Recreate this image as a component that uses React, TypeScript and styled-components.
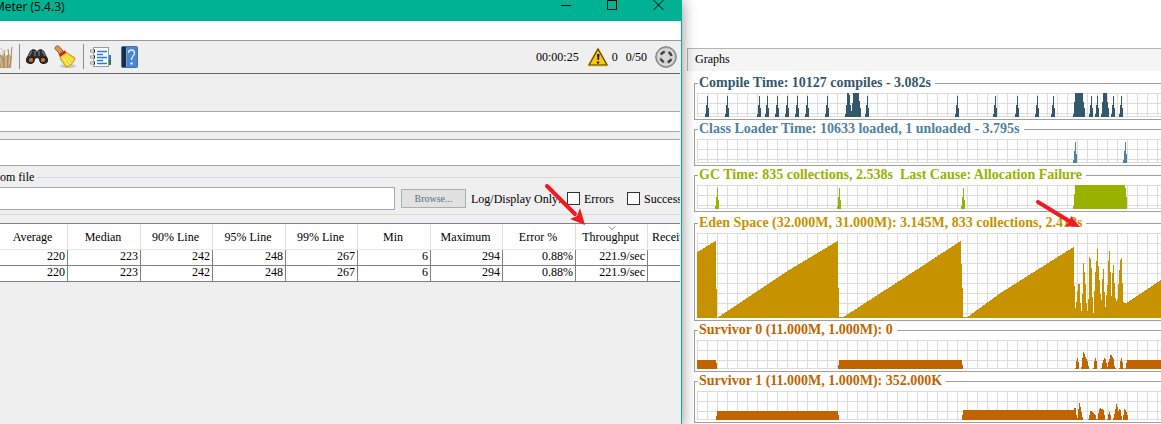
import React from 'react';
import styled, { createGlobalStyle } from 'styled-components';

const Global = createGlobalStyle`
  * { box-sizing: border-box; }
  body {
    margin: 0;
    background: #fff;
    color: #000;
    font: 12px/14px "Liberation Serif", serif;
    overflow: hidden;
  }
  button, input { font: inherit; color: inherit; }
`;

const Desktop = styled.main`
  display: grid;
  grid-template-columns: 682fr 479fr;
  min-height: 100vh;
`;

const AppWindow = styled.section`
  position: relative;
  z-index: 1;
  min-width: 0;
  background: #efefef;
  border-right: 1px solid #00b294;
  box-shadow: 0 0 14px rgba(0, 0, 0, 0.45);
`;

const TitleBar = styled.header`
  display: flex;
  justify-content: space-between;
  align-items: flex-start;
  height: 21px;
  background: #00b294;
`;

const WindowTitle = styled.h1`
  margin: 0 0 0 -6px;
  font: 12px/13px "Open Sans", sans-serif;
`;

const WindowButtons = styled.div`
  display: flex;
`;

const WindowButton = styled.button`
  display: flex;
  justify-content: center;
  width: 46px;
  height: 11px;
  padding: 0;
  border: 0;
  background: none;
`;

const MenuBar = styled.nav`
  height: 20px;
  background: #fff;
  border-bottom: 1px solid #999;
`;

const Content = styled.div`
  margin-right: 1px;
  overflow: hidden;
`;

const Toolbar = styled.div`
  display: flex;
  justify-content: space-between;
  height: 33px;
  padding-bottom: 1px;
  border-bottom: 1px solid #686868;
`;

const ToolGroup = styled.div<{ $gap?: number }>`
  display: flex;
  align-items: center;
  gap: ${(p) => p.$gap ?? 6}px;
`;

const ToolButton = styled.button`
  display: flex;
  padding: 0;
  border: 0;
  background: none;
`;

const Separator = styled.span`
  width: 1px;
  height: 25px;
  background: #8c8c8c;
`;

const Status = styled(ToolGroup)`
  padding-right: 3px;
`;

const Form = styled.form`
  display: flex;
  flex-direction: column;
  padding-top: 37px;
`;

const WideField = styled.input<{ $height: number }>`
  width: 100%;
  height: ${(p) => p.$height}px;
  margin-bottom: ${(p) => (p.$height > 21 ? 5 : 7)}px;
  border: solid #a6a6a8;
  border-width: 1px 0;
  background: #fff;
`;

const FileGroup = styled.fieldset`
  min-width: 0;
  margin: 0 0 8px;
  padding: 3px 0 4px;
  border: solid #dadada;
  border-width: 1px 0;
`;

const FileLegend = styled.legend`
  height: 13px;
  padding: 0 3px 0 0;
  line-height: 13px;
`;

const FileRow = styled.div`
  display: flex;
  align-items: center;
  white-space: nowrap;
`;

const FileInput = styled.input`
  flex: 0 0 395px;
  height: 23px;
  margin-right: 6px;
  border: 1px solid #a6a6b0;
  border-left: 0;
  background: #fff;
`;

const Browse = styled.button`
  flex: 0 0 65px;
  height: 19px;
  margin-right: 5px;
  padding: 0;
  border: 1px solid #adadad;
  background: #e1e1e1;
  color: #5a7484;
  font-size: 10px;
`;

const OnlyLabel = styled.span`
  flex: 0 0 96px;
`;

const CheckLabel = styled.label`
  display: flex;
  align-items: center;
  flex: 0 0 60px;
  gap: 4px;
`;

const CheckBox = styled.input`
  appearance: none;
  flex: none;
  width: 13px;
  height: 13px;
  margin: 0;
  border: 1px solid #333;
  background: #fff;
`;

const Results = styled.table`
  width: 100%;
  table-layout: fixed;
  border-collapse: separate;
  border-spacing: 0;
  border-top: 1px solid #82828c;
  background: #fff;
`;

const HeadCell = styled.th`
  position: relative;
  height: 26px;
  padding: 1px 5px 0 3px;
  border-right: 1px solid #e0e0e0;
  border-bottom: 1px solid #e8e8e8;
  font-weight: 400;
  white-space: nowrap;
  overflow: hidden;
  &:last-child { border-right: 0; padding-left: 4px; text-align: left; }
`;

const SortMark = styled.svg`
  position: absolute;
  top: 2px;
  left: 32px;
`;

const Cell = styled.td`
  height: 16px;
  padding: 0 2px 2px 0;
  border-right: 1px solid #808080;
  border-bottom: 1px solid #808080;
  line-height: 13px;
  text-align: right;
  &:last-child { border-right: 0; }
`;

const Monitor = styled.section`
  position: relative;
  min-width: 0;
  padding: 48px 0 0 5px;
  overflow: hidden;
`;

const TabTitle = styled.h2`
  height: 23px;
  margin: 0 0 6px;
  padding-left: 7px;
  border: solid #b4b4b4;
  border-width: 1px 0 0 1px;
  background: #f5f5f5;
  font-size: 12px;
  font-weight: 400;
  line-height: 21px;
`;

const Panels = styled.div`
  display: flex;
  flex-direction: column;
  gap: 3px;
  margin: 0 0 5px 7px;
`;

const Panel = styled.fieldset<{ $color: string }>`
  min-width: 0;
  margin: 0;
  padding: 3px 0 2px 2px;
  border: solid #a0a0a0;
  border-width: 1px 0 1px 1px;
  color: ${(p) => p.$color};
`;

const PanelTitle = styled.legend`
  height: 13px;
  margin-left: 1px;
  padding: 0 4px 0 1px;
  font-size: 14px;
  font-weight: 700;
  line-height: 12px;
  white-space: pre;
`;

const Plot = styled.svg`
  display: block;
  width: 100%;
`;

const Arrow = styled.svg<{ $x: number; $y: number }>`
  position: absolute;
  left: ${(p) => p.$x}px;
  top: ${(p) => p.$y}px;
  pointer-events: none;
`;

type Point = [number, number];

/* One-pixel columns through the given (x, height) points. */
function columns(points: Point[], base: number) {
  let d = `M${points[0][0]} ${base}`;
  for (let i = 0; i < points.length - 1; i++) {
    const [x0, h0] = points[i];
    const [x1, h1] = points[i + 1];
    for (let x = x0; x < x1; x++) {
      const h = Math.round(h0 + ((h1 - h0) * (x - x0)) / (x1 - x0));
      d += `V${base - h}h1`;
    }
  }
  return `${d}V${base}z`;
}

const noise = (start: number, heights: number[]): Point[] =>
  heights.map((h, i) => [start + i, h]);

const spikes = (tips: number[], base: number) =>
  tips.map((t) => `M${t - 2} ${base}v-3h1v-9h1v-9h1v12h1v9z`).join('');

const compile =
  spikes([10, 30, 62, 70, 80, 90, 100, 110, 130, 170, 260, 298, 320, 340, 356, 394, 400, 416, 424], 24) +
  'M148 24v-3h1v-9h1v-12h2v2h1v10h1v6h1v-8h1v-10h6v8h1v7h1v9z' +
  'M376 24v-3h1v-12h1v-9h8v9h1v6h1v9z' +
  'M404 24v-3h1v-12h1v-9h4v9h1v6h1v9z';
const loader = spikes([378, 428], 24);
const gc = spikes([20, 142, 266], 24) + 'M376 24v-3h1v-12h1v-9h50v3h1v9h1v12z';

const eden = columns(
  [
    [0, 66], [18, 77], [19, 29], [20, 0], [21, 1], [90, 47], [140, 77], [141, 30], [142, 1], [146, 1],
    [228, 54], [263, 77], [265, 30], [266, 1], [270, 1], [303, 25], [376, 71],
    ...noise(377, [
      32, 10, 16, 27, 34, 34, 15, 7, 24, 55, 46, 34, 15, 7, 19, 61, 59, 50, 21, 5, 27, 46, 57, 69, 52, 38, 24, 18,
      39, 49, 26, 11, 23, 33, 57, 67, 46, 22, 45, 53, 35, 20, 17, 19, 34, 48, 58, 60, 35, 16, 15, 15, 15,
    ]),
    [465, 39], [600, 77],
  ],
  85,
);

const survivor0 = columns(
  [
    [0, 9], [18, 9], [19, 6], [20, 0], [140, 0], [141, 4], [142, 9], [264, 9], [265, 4], [266, 0], [377, 0],
    ...noise(378, [
      1, 8, 11, 7, 0, 0, 2, 11, 17, 15, 12, 10, 8, 3, 0, 0, 0, 0, 1, 8, 11, 8, 0, 0, 0, 0, 1, 6, 9, 11, 10, 6, 2,
      7, 10, 14, 14, 12, 10, 3, 1, 0, 0, 0, 1, 8, 11, 7, 1, 0, 1, 6, 9,
    ]),
    [600, 9],
  ],
  29,
);

const survivor1 = columns(
  [
    [18, 0], [19, 4], [20, 9], [140, 9], [141, 5], [142, 0], [264, 0], [265, 5], [266, 10], [376, 10],
    ...noise(377, [
      12, 12, 5, 2, 11, 17, 13, 8, 3, 0, 0, 0, 0, 0, 1, 5, 9, 9, 8, 7, 6, 5, 1, 1, 7, 11, 12, 11, 11, 10, 5, 0, 0,
      1, 6, 8, 5, 0, 0, 2, 6, 11, 16, 13, 9, 11, 10, 4, 0, 5, 11, 10, 8, 5, 0,
    ]),
  ],
  29,
);

const timePanels = [
  { title: 'Compile Time: 10127 compiles - 3.082s', color: '#34586b', height: 24, d: compile },
  { title: 'Class Loader Time: 10633 loaded, 1 unloaded - 3.795s', color: '#4f819f', height: 24, d: loader },
  { title: 'GC Time: 835 collections, 2.538s  Last Cause: Allocation Failure', color: '#98b200', height: 24, d: gc },
];

const memoryPanels = [
  { title: 'Eden Space (32.000M, 31.000M): 3.145M, 833 collections, 2.418s', color: '#c79200', height: 85, d: eden },
  { title: 'Survivor 0 (11.000M, 1.000M): 0', color: '#c16400', height: 29, d: survivor0 },
  { title: 'Survivor 1 (11.000M, 1.000M): 352.000K', color: '#c16400', height: 29, d: survivor1 },
];

type GraphProps = { title: string; color: string; height: number; d: string };

function Graph({ title, color, height, d }: GraphProps) {
  const id = `grid-${title.replace(/\W/g, '').slice(0, 9)}`;
  return (
    <Panel $color={color}>
      <PanelTitle>{title}</PanelTitle>
      <Plot height={height} shapeRendering="crispEdges" aria-hidden="true">
        <defs>
          <pattern id={id} width="10" height="10" patternUnits="userSpaceOnUse">
            <path d="M0 0h10v1H1v9H0z" fill="#dcdcdc" />
          </pattern>
        </defs>
        <rect width="100%" height={height} fill={`url(#${id})`} />
        <rect y={height - 1} width="100%" height="1" fill="#dcdcdc" />
        <path d={d} fill={color} />
      </Plot>
    </Panel>
  );
}

const Wheat = () => (
  <svg width="13" height="24" viewBox="0 0 13 24" fill="none">
    <path d="M0 9l4 4 3-3 5 1-1 12H0z" fill="#bfa27d" />
    <path d="M1 23V10M4 23L3 9M7 23l1-13M10 22l2-20M5 15L4 5M9 12L8 4" stroke="#a5865f" />
    <path d="M2 22L0 12M6 22V12M9 20l1-9" stroke="#dcc4a0" />
    <path d="M0 3l5 4M1 8l5-2" stroke="#c9c9bd" />
  </svg>
);

const Binoculars = () => (
  <svg width="22" height="16" viewBox="0 0 22 16">
    <path d="M4 2l3-2 3 1 1 2 1-2 3-1 3 2 3 6c3 4 0 7-3 7s-5-2-5-5l-2-1-2 1c0 3-2 5-5 5s-6-3-3-7z" fill="#292b2d" />
    <path d="M6 2L3 7M16 2l3 5M9 2v5M13 2v5" stroke="#777c80" strokeWidth="1.3" />
    <circle cx="5" cy="11" r="3" fill="#a85a28" stroke="#131313" />
    <circle cx="17" cy="11" r="3" fill="#a85a28" stroke="#131313" />
    <path d="M4 12l2-2M16 12l2-2" stroke="#e99b5d" />
  </svg>
);

const Broom = () => (
  <svg width="23" height="24" viewBox="0 0 23 24">
    <ellipse cx="14" cy="21" rx="8" ry="2" fill="#c9c9c9" />
    <path d="M1.500 2c1-2 4-1 5 1l4 5-4 3-3-5C1.500 5 .5 4 1.500 2z" fill="#d39a4c" stroke="#8f5d20" />
    <path d="M6 11l6-4c2 2 6 4 9 6-1 4-4 8-9 9-1-3-6-6-6-11z" fill="#f3d72e" stroke="#b2921b" />
    <path d="M9 12l5 9M11 11l6 8M13 10l6 6" stroke="#fff287" />
    <path d="M5.500 10.500l6-4" stroke="#d52322" strokeWidth="3" />
  </svg>
);

const Notebook = () => (
  <svg width="25" height="22" viewBox="0 0 25 22">
    <path d="M18 9h3v5h-3z" fill="#2479df" />
    <path d="M18 14h3v5h-3z" fill="#198a28" />
    <rect x="3.500" y="1.500" width="15" height="19" fill="#fff" stroke="#999" />
    <path d="M7 5.500h10M7 11.500h10M7 17.500h10" stroke="#2479e6" strokeWidth="1.300" />
    <path d="M7 8.500h6M7 14.500h6" stroke="#2479e6" strokeWidth="1.300" />
    <path d="M0 5h5M0 11h5M0 17h5" stroke="#999" strokeWidth="3" />
    <path d="M1 5h3M1 11h3M1 17h3" stroke="#fff" />
    <path d="M4.500 3.500v3M4.500 9.500v3M4.500 15.500v3" stroke="#222" />
  </svg>
);

const HelpBook = () => (
  <svg width="18" height="22" viewBox="0 0 18 22">
    <rect x="0.500" y="0.500" width="16" height="21" rx="1" fill="#4a86d6" stroke="#4a6f9e" />
    <path d="M1 1h4v20H1z" fill="#1d2d40" />
    <path d="M5.500 2v19" stroke="#6aa2e4" />
    <path d="M7.500 7c0-4 6-4 6 0 0 3-3 3-3 7" fill="none" stroke="#e4efff" strokeWidth="1.300" />
    <circle cx="10.500" cy="17.500" r="1.200" fill="#e4efff" />
  </svg>
);

const Warning = () => (
  <svg width="22" height="20" viewBox="0 0 22 20">
    <path d="M11 1.500L20.500 18.500h-19z" fill="#f8c900" stroke="#f5d34d" strokeWidth="2" strokeLinejoin="round" />
    <path d="M11 2L20 18H2z" fill="#fbc905" stroke="#4a400c" strokeWidth="1.200" strokeLinejoin="round" />
    <path d="M10 7h2.500l-.5 6h-1.500z" fill="#222" />
    <circle cx="11" cy="15.500" r="1.200" fill="#222" />
  </svg>
);

const Engine = () => (
  <svg width="22" height="22" viewBox="0 0 22 22">
    <circle cx="11" cy="11" r="10.300" fill="#a9a9a9" stroke="#787878" />
    <circle cx="11" cy="11" r="8" fill="#cfcfcf" stroke="#dedede" strokeWidth="1.500" />
    <circle cx="11" cy="11" r="5.500" fill="none" stroke="#424242" strokeWidth="2.600" strokeDasharray="4.640 4" strokeDashoffset="-2" />
    <circle cx="11" cy="11" r="3.800" fill="#d8d8d8" />
  </svg>
);

const headings = ['Average', 'Median', '90% Line', '95% Line', '99% Line', 'Min', 'Maximum', 'Error %', 'Throughput', 'Received KB/sec'];
const widths = [68, 73, 72, 73, 72, 73, 72, 73, 72];
const values = ['220', '223', '242', '248', '267', '6', '294', '0.88%', '221.9/sec', ''];

export default function App() {
  return (
    <>
      <Global />
      <Desktop>
        <AppWindow>
          <TitleBar>
            <WindowTitle>Meter (5.4.3)</WindowTitle>
            <WindowButtons>
              <WindowButton aria-label="Minimize">
                <svg width="11" height="11"><path d="M0 5.500h10" stroke="#000" /></svg>
              </WindowButton>
              <WindowButton aria-label="Maximize">
                <svg width="11" height="11"><path d="M.5 .5h9v9h-9z" fill="none" stroke="#000" /></svg>
              </WindowButton>
              <WindowButton aria-label="Close">
                <svg width="11" height="11"><path d="M.5 0l10 10M10.500 0l-10 10" stroke="#000" /></svg>
              </WindowButton>
            </WindowButtons>
          </TitleBar>
          <MenuBar />
          <Content>
            <Toolbar>
              <ToolGroup>
                <ToolButton aria-label="Templates"><Wheat /></ToolButton>
                <Separator />
                <ToolButton aria-label="Search"><Binoculars /></ToolButton>
                <ToolButton aria-label="Clear all"><Broom /></ToolButton>
                <Separator />
                <ToolButton aria-label="Function helper"><Notebook /></ToolButton>
                <ToolButton aria-label="Help"><HelpBook /></ToolButton>
              </ToolGroup>
              <Status $gap={8}>
                <span>00:00:25</span>
                <ToolGroup $gap={3}>
                  <ToolButton aria-label="Errors in log"><Warning /></ToolButton>
                  <span>0</span>
                </ToolGroup>
                <span>0/50</span>
                <Engine />
              </Status>
            </Toolbar>
            <Form onSubmit={(e) => e.preventDefault()}>
              <WideField $height={21} aria-label="Name" />
              <WideField $height={27} aria-label="Comments" />
              <FileGroup>
                <FileLegend>om file</FileLegend>
                <FileRow>
                  <FileInput aria-label="Filename" />
                  <Browse type="button">Browse...</Browse>
                  <OnlyLabel>Log/Display Only:</OnlyLabel>
                  <CheckLabel><CheckBox type="checkbox" />Errors</CheckLabel>
                  <CheckLabel><CheckBox type="checkbox" />Successes</CheckLabel>
                </FileRow>
              </FileGroup>
            </Form>
            <Results>
              <colgroup>
                {widths.map((w, i) => <col key={i} width={w} />)}
                <col />
              </colgroup>
              <thead>
                <tr>
                  {headings.map((h) => (
                    <HeadCell key={h} scope="col">
                      {h}
                      {h === 'Throughput' && (
                        <SortMark width="8" height="5"><path d="M.5 .5l3.500 3 3.500-3" fill="none" stroke="#888" /></SortMark>
                      )}
                    </HeadCell>
                  ))}
                </tr>
              </thead>
              <tbody>
                {[0, 1].map((r) => (
                  <tr key={r}>{values.map((v, i) => <Cell key={i}>{v}</Cell>)}</tr>
                ))}
              </tbody>
            </Results>
          </Content>
          <Arrow $x={544} $y={183} width="42" height="43" aria-hidden="true">
            <path d="M3 3l28 28" stroke="#ed1c24" strokeWidth="4" strokeLinecap="round" />
            <path d="M41 42L26 36l7-3 3-8z" fill="#ed1c24" />
          </Arrow>
        </AppWindow>
        <Monitor>
          <TabTitle>Graphs</TabTitle>
          <Panels>{timePanels.map((p) => <Graph key={p.title} {...p} />)}</Panels>
          <Panels>{memoryPanels.map((p) => <Graph key={p.title} {...p} />)}</Panels>
          <Arrow $x={353} $y={199} width="46" height="30" aria-hidden="true">
            <path d="M3 3l31 19" stroke="#ed1c24" strokeWidth="4" strokeLinecap="round" />
            <path d="M45 28l-15-1 4-4 2-6z" fill="#ed1c24" />
          </Arrow>
        </Monitor>
      </Desktop>
    </>
  );
}
